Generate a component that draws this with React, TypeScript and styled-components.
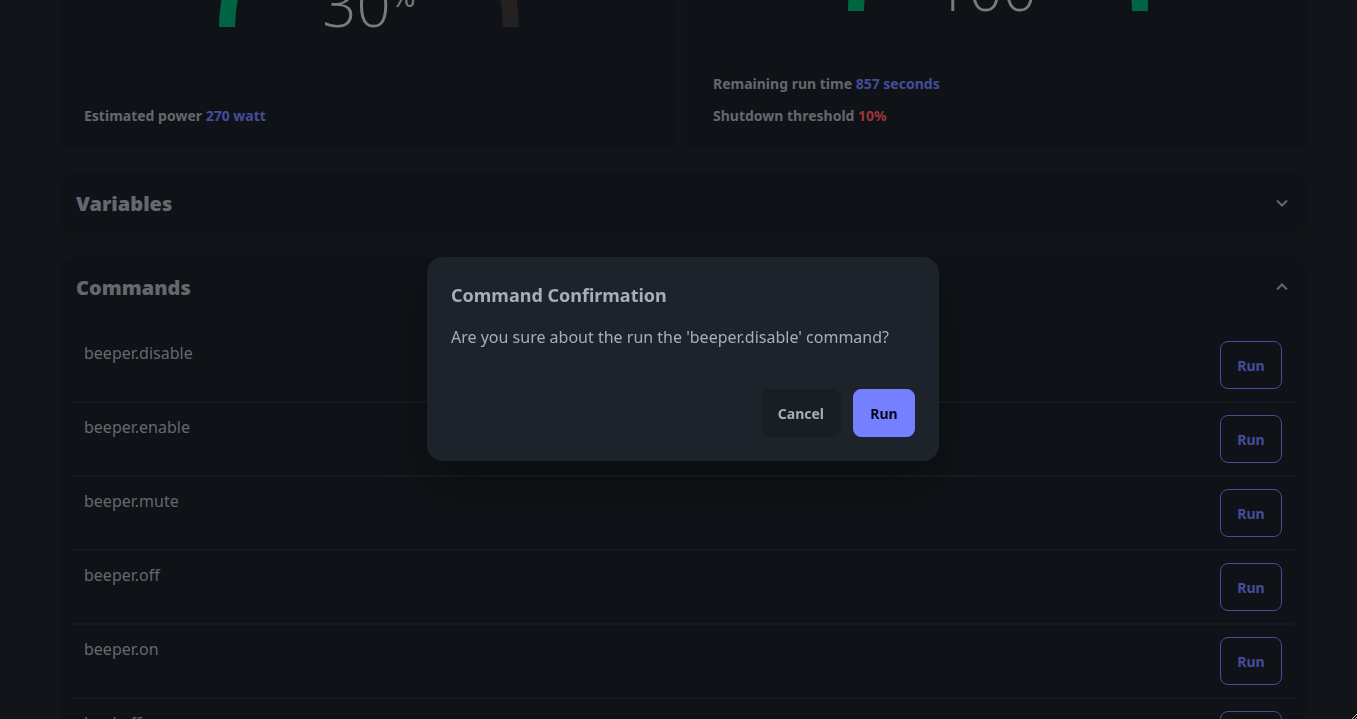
import React from "react";
import styled, { createGlobalStyle } from "styled-components";

const GlobalStyle = createGlobalStyle`
  *, *::before, *::after { box-sizing: border-box; }
  body {
    margin: 0;
    background: #1d232a;
    color: #a6adbb;
    font-family: "Noto Sans", "Open Sans", sans-serif;
    font-size: 16px;
    line-height: 24px;
  }
  h2, h3, p { margin: 0; }
  button { font-family: inherit; cursor: pointer; }
`;

const Page = styled.main`
  display: flex;
  flex-direction: column;
  gap: 24px;
  height: 100vh;
  overflow: hidden;
  padding: 0 51px 0 60px;
`;

const GaugeGrid = styled.section`
  display: grid;
  grid-template-columns: 1fr 1fr;
  gap: 12px;
  flex-shrink: 0;
`;

const GaugeCard = styled.article`
  display: flex;
  flex-direction: column;
  justify-content: space-between;
  height: 149px;
  padding: 0 24px 21px;
  background: #191e25;
  border-radius: 0 0 8px 8px;
`;

const GaugeView = styled.div<{ $visible: number }>`
  display: flex;
  justify-content: center;
  align-items: flex-end;
  height: ${(p) => p.$visible}px;
  overflow: hidden;
`;

const GaugeSvg = styled.svg`
  display: block;
  flex-shrink: 0;
`;

const GaugeValue = styled.text`
  fill: #cdcdcd;
  font-family: "Open Sans", sans-serif;
  font-size: 60px;
  font-weight: 300;
`;

const GaugeUnit = styled.tspan`
  font-size: 30px;
  font-weight: 400;
`;

const Stats = styled.div`
  display: flex;
  flex-direction: column;
  gap: 8px;
`;

const Stat = styled.p`
  font-size: 14px;
  font-weight: 700;
`;

const StatValue = styled.span<{ $tone: "primary" | "error" }>`
  color: ${(p) => (p.$tone === "primary" ? "#7480ff" : "#ff5861")};
`;

const Panel = styled.section`
  flex-shrink: 0;
  background: #191e25;
  border-radius: 16px;
`;

const PanelHeader = styled.button`
  display: flex;
  justify-content: space-between;
  align-items: center;
  width: 100%;
  height: 60px;
  padding: 0 18px 0 16px;
  border: 0;
  background: transparent;
  color: inherit;
`;

const PanelTitle = styled.span`
  padding-top: 2px;
  font-size: 20px;
  font-weight: 900;
  line-height: 28px;
`;

const CommandTable = styled.table`
  width: calc(100% - 24px);
  margin: 12px 12px 0;
  border-collapse: separate;
  border-spacing: 0;
`;

const Cell = styled.td`
  height: 74px;
  padding: 12px;
  border-bottom: 2px solid #262c34;
  vertical-align: top;
`;

const ActionCell = styled(Cell)`
  text-align: right;
  line-height: 0;
`;

const Button = styled.button<{ $variant: "outline" | "neutral" | "primary" }>`
  min-width: 62px;
  height: 48px;
  padding: 2px 16px 0;
  border: 1px solid;
  border-radius: 8px;
  font-size: 14px;
  font-weight: 700;
  line-height: 16px;
  ${(p) =>
    ({
      outline: "background: transparent; border-color: #7480ff; color: #7480ff;",
      neutral: "background: #191e24; border-color: #191e24; color: #a6adbb;",
      primary: "background: #7480ff; border-color: #7480ff; color: #050617;",
    })[p.$variant]}
`;

const Overlay = styled.div`
  position: fixed;
  inset: 0;
  display: grid;
  place-items: center;
  padding: 0 0 1px 9px;
  background: rgba(0, 0, 0, 0.4);
`;

const Dialog = styled.div`
  width: 512px;
  max-width: 92vw;
  padding: 24px;
  background: #1d232a;
  border-radius: 16px;
  box-shadow: 0 25px 50px 0 rgba(0, 0, 0, 0.25);
`;

const DialogTitle = styled.h3`
  font-size: 18px;
  font-weight: 700;
  line-height: 28px;
`;

const DialogText = styled.p`
  padding: 16px 0;
`;

const DialogActions = styled.div`
  display: flex;
  justify-content: flex-end;
  gap: 12px;
  margin-top: 24px;
`;

const ResizeGrip = styled.svg`
  position: absolute;
  right: 0;
  bottom: 0;
`;

const RADIUS = 142;

function Gauge({ percent, unit, visible }: { percent: number; unit?: string; visible: number }) {
  const arc = "M8 150 A142 142 0 0 1 292 150";
  const length = Math.PI * RADIUS;
  return (
    <GaugeView $visible={visible}>
      <GaugeSvg width="300" height="152" viewBox="0 0 300 152" role="img" aria-label={`${percent}`}>
        <path d={arc} fill="none" stroke="#3b3838" strokeWidth="16" />
        <path
          d={arc}
          fill="none"
          stroke="#00a96e"
          strokeWidth="16"
          strokeDasharray={`${(length * percent) / 100} ${length * 2}`}
        />
        <GaugeValue x="150" y="150" textAnchor="middle">
          {percent}
          {unit && <GaugeUnit dy="-20">{unit}</GaugeUnit>}
        </GaugeValue>
      </GaugeSvg>
    </GaugeView>
  );
}

function Chevron({ open }: { open: boolean }) {
  return (
    <svg width="12" height="8" viewBox="0 0 12 8" aria-hidden="true">
      <path
        d={open ? "M1 6.5 L6 1.5 L11 6.5" : "M1 1.5 L6 6.5 L11 1.5"}
        fill="none"
        stroke="currentColor"
        strokeWidth="2"
      />
    </svg>
  );
}

const commands = [
  "beeper.disable",
  "beeper.enable",
  "beeper.mute",
  "beeper.off",
  "beeper.on",
  "load.off",
];

export default function App() {
  return (
    <>
      <GlobalStyle />
      <Page>
        <GaugeGrid>
          <GaugeCard>
            <Gauge percent={30} unit="%" visible={29} />
            <Stats>
              <Stat>
                Estimated power <StatValue $tone="primary">270 watt</StatValue>
              </Stat>
            </Stats>
          </GaugeCard>
          <GaugeCard>
            <Gauge percent={100} unit="%" visible={13} />
            <Stats>
              <Stat>
                Remaining run time <StatValue $tone="primary">857 seconds</StatValue>
              </Stat>
              <Stat>
                Shutdown threshold <StatValue $tone="error">10%</StatValue>
              </Stat>
            </Stats>
          </GaugeCard>
        </GaugeGrid>

        <Panel>
          <PanelHeader aria-expanded={false}>
            <PanelTitle>Variables</PanelTitle>
            <Chevron open={false} />
          </PanelHeader>
        </Panel>

        <Panel>
          <PanelHeader aria-expanded={true}>
            <PanelTitle>Commands</PanelTitle>
            <Chevron open />
          </PanelHeader>
          <CommandTable>
            <tbody>
              {commands.map((name) => (
                <tr key={name}>
                  <Cell>{name}</Cell>
                  <ActionCell>
                    <Button $variant="outline">Run</Button>
                  </ActionCell>
                </tr>
              ))}
            </tbody>
          </CommandTable>
        </Panel>
      </Page>

      <Overlay>
        <Dialog role="dialog" aria-modal="true" aria-labelledby="confirm-title">
          <DialogTitle id="confirm-title">Command Confirmation</DialogTitle>
          <DialogText>Are you sure about the run the 'beeper.disable' command?</DialogText>
          <DialogActions>
            <Button $variant="neutral">Cancel</Button>
            <Button $variant="primary">Run</Button>
          </DialogActions>
        </Dialog>
        <ResizeGrip width="6" height="6" viewBox="0 0 6 6" aria-hidden="true">
          <path d="M1 6 L6 1 M4 6 L6 4" stroke="#b8b8b8" strokeWidth="1" />
        </ResizeGrip>
      </Overlay>
    </>
  );
}
